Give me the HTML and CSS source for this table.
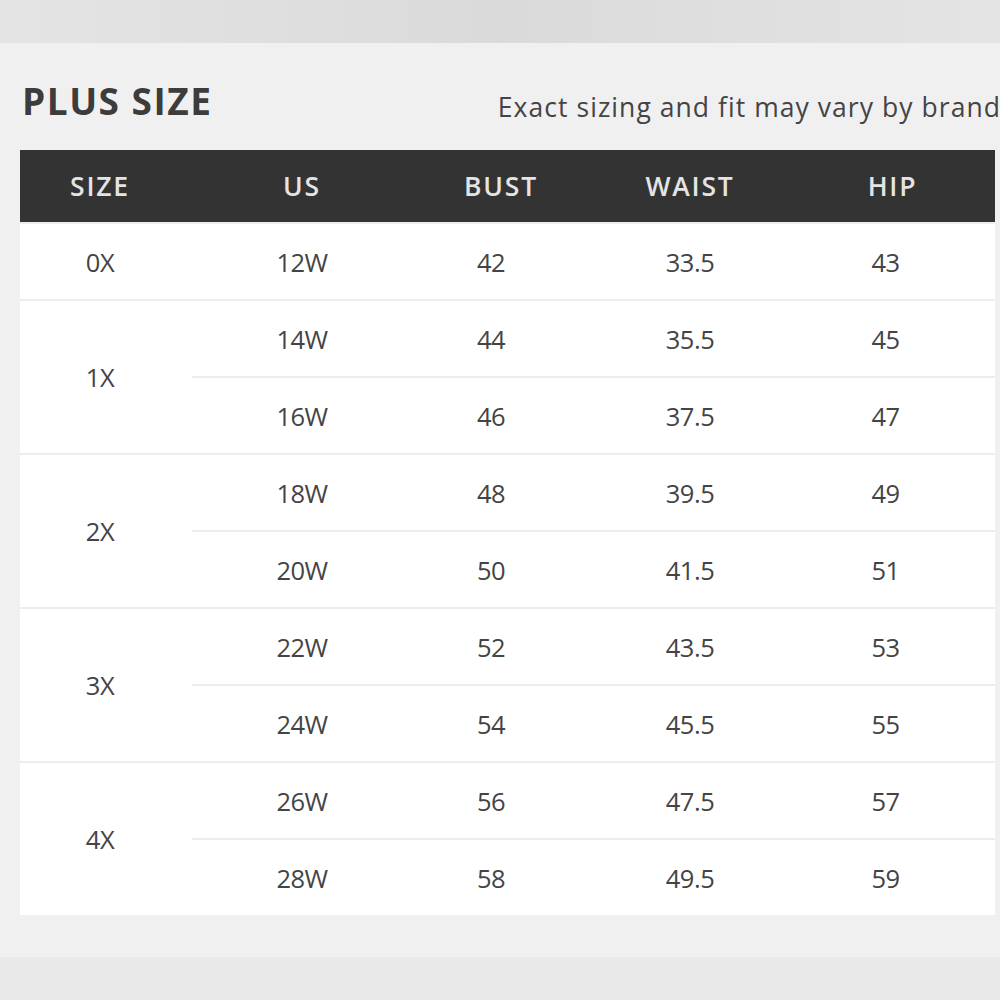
FILE: index.html
```html
<!DOCTYPE html>
<html lang="en">
<head>
<meta charset="utf-8">
<title>Plus Size Chart</title>
<link rel="stylesheet" href="styles.css">
</head>
<body>
<div class="topbar"></div>
<main class="panel">
  <div class="titlebar">
    <h1 class="title">PLUS SIZE</h1>
    <p class="note">Exact sizing and fit may vary by brand</p>
  </div>
  <div class="chart">
    <div class="head">
      <div class="hcell hsize">SIZE</div>
      <div class="hcell">US</div>
      <div class="hcell">BUST</div>
      <div class="hcell">WAIST</div>
      <div class="hcell">HIP</div>
    </div>
    <div class="group">
      <div class="size">0X</div>
      <div class="rows">
        <div class="row"><span>12W</span><span>42</span><span>33.5</span><span>43</span></div>
      </div>
    </div>
    <div class="group">
      <div class="size">1X</div>
      <div class="rows">
        <div class="row"><span>14W</span><span>44</span><span>35.5</span><span>45</span></div>
        <div class="row"><span>16W</span><span>46</span><span>37.5</span><span>47</span></div>
      </div>
    </div>
    <div class="group">
      <div class="size">2X</div>
      <div class="rows">
        <div class="row"><span>18W</span><span>48</span><span>39.5</span><span>49</span></div>
        <div class="row"><span>20W</span><span>50</span><span>41.5</span><span>51</span></div>
      </div>
    </div>
    <div class="group">
      <div class="size">3X</div>
      <div class="rows">
        <div class="row"><span>22W</span><span>52</span><span>43.5</span><span>53</span></div>
        <div class="row"><span>24W</span><span>54</span><span>45.5</span><span>55</span></div>
      </div>
    </div>
    <div class="group">
      <div class="size">4X</div>
      <div class="rows">
        <div class="row"><span>26W</span><span>56</span><span>47.5</span><span>57</span></div>
        <div class="row"><span>28W</span><span>58</span><span>49.5</span><span>59</span></div>
      </div>
    </div>
  </div>
</main>
<div class="bottombar"></div>
</body>
</html>
```

FILE: styles.css
```css
* { box-sizing: border-box; }
html, body { margin: 0; padding: 0; }
body {
  width: 1000px;
  height: 1000px;
  overflow: hidden;
  background: #f1f0f1;
  font-family: "Open Sans", "Liberation Sans", sans-serif;
  color: #444;
}
.topbar {
  height: 43px;
  background: linear-gradient(90deg, #e4e4e4 0%, #dadada 50%, #e4e4e4 100%);
}
.panel {
  height: 914px;
  padding: 0 5px 0 20px;
}
.titlebar {
  height: 107px;
  display: flex;
  justify-content: space-between;
  align-items: flex-start;
  padding-top: 36px;
}
.title {
  margin: 0 0 0 2px;
  font-size: 37px;
  font-weight: 700;
  color: #3c3c3c;
  line-height: 44px;
  letter-spacing: 1.5px;
}
.note {
  margin: 8px -6px 0 0;
  font-size: 26.5px;
  line-height: 40px;
  color: #444;
  letter-spacing: 1.05px;
  white-space: nowrap;
}
.chart {
  width: 975px;
  background: #ffffff;
}
.head {
  height: 72px;
  background: #333333;
  display: grid;
  grid-template-columns: 172px 220px 178px 200px 205px;
  align-items: center;
}
.hcell {
  text-align: center;
  color: #e4e4e4;
  font-size: 26.5px;
  font-weight: 600;
  letter-spacing: 1.8px;
}
.hsize { padding-right: 12px; }
.group {
  display: grid;
  grid-template-columns: 172px 803px;
  border-top: 2px solid #ededed;
}
.size {
  display: flex;
  align-items: center;
  justify-content: center;
  padding-right: 12px;
  font-size: 25.5px;
  letter-spacing: -0.5px;
}
.row {
  height: 75px;
  display: grid;
  grid-template-columns: 220px 178px 200px 205px;
  align-items: center;
  font-size: 25.5px;
  letter-spacing: -0.5px;
}
.row + .row {
  height: 77px;
  border-top: 2px solid #ededed;
}
.row span { text-align: center; }
.row span:nth-child(2) { padding-right: 20px; }
.row span:nth-child(4) { padding-right: 14px; }
.bottombar {
  height: 43px;
  background: #e9e9e9;
}
```
